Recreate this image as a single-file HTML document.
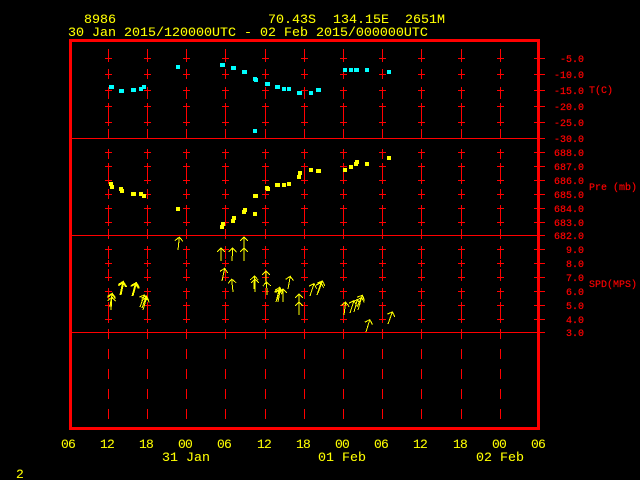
<!DOCTYPE html>
<html><head><meta charset="utf-8"><title>Plot</title>
<style>
html,body{margin:0;padding:0;background:#000;width:640px;height:480px;overflow:hidden}
svg{display:block;position:absolute;left:0;top:0}
text{font-family:"Liberation Mono",monospace;white-space:pre}
.y{fill:#ff0;font-size:13.33px;stroke:#ff0;stroke-width:.05}
.x{fill:#ff0;font-size:13px;letter-spacing:-.8px;stroke:#ff0;stroke-width:.05}
.r{fill:#f00;font-size:10px;stroke:#f00;stroke-width:.2;text-anchor:end}
.l{fill:#f00;font-size:10px;stroke:#f00;stroke-width:.15}
</style></head><body>
<svg width="640" height="480" viewBox="0 0 640 480" xmlns="http://www.w3.org/2000/svg">
<defs>
<path id="col" fill="none" stroke="#f00" stroke-width="1" shape-rendering="crispEdges" d="M.5 49V59M.5 69V79M.5 89V99M.5 109V119M.5 129V139M.5 149V159M.5 169V179M.5 189V199M.5 209V219M.5 229V239M.5 249V259M.5 269V279M.5 289V299M.5 309V319M.5 329V339M.5 349V359M.5 369V379M.5 389V399M.5 409V419
M-3 58.5h7M.5 55v7M-3 74.5h7M.5 71v7M-3 90.5h7M.5 87v7M-3 106.5h7M.5 103v7M-3 122.5h7M.5 119v7
M-3 152.5h7M.5 149v7M-3 166.5h7M.5 163v7M-3 180.5h7M.5 177v7M-3 194.5h7M.5 191v7M-3 208.5h7M.5 205v7M-3 222.5h7M.5 219v7
M-3 249.5h7M.5 246v7M-3 263.5h7M.5 260v7M-3 277.5h7M.5 274v7M-3 291.5h7M.5 288v7M-3 305.5h7M.5 302v7M-3 319.5h7M.5 316v7"/>
<path id="a" fill="none" stroke="#ff0" stroke-width="1" shape-rendering="crispEdges" d="M0 0V-13M-4 -9L0 -13L4 -9"/>
</defs>

<use href="#col" x="108"/><use href="#col" x="147"/><use href="#col" x="186"/><use href="#col" x="225"/><use href="#col" x="265"/><use href="#col" x="304"/><use href="#col" x="343"/><use href="#col" x="382"/><use href="#col" x="421"/><use href="#col" x="461"/><use href="#col" x="500"/>

<path fill="none" stroke="#f00" stroke-width="1" shape-rendering="crispEdges" d="M72 138.5H545M72 235.5H545M72 332.5H545M534 58.5h11M534 74.5h11M534 90.5h11M534 106.5h11M534 122.5h11M534 152.5h11M534 166.5h11M534 180.5h11M534 194.5h11M534 208.5h11M534 222.5h11M534 249.5h11M534 263.5h11M534 277.5h11M534 291.5h11M534 305.5h11M534 319.5h11"/>

<rect x="70.5" y="40.5" width="468" height="388" fill="none" stroke="#f00" stroke-width="3" shape-rendering="crispEdges"/>

<g fill="#0ff" shape-rendering="crispEdges">
<rect x="109" y="85" width="5" height="4"/><rect x="119" y="89" width="5" height="4"/><rect x="131" y="88" width="5" height="4"/><rect x="139" y="87" width="4" height="4"/><rect x="142" y="85" width="4" height="4"/><rect x="176" y="65" width="4" height="4"/><rect x="220" y="63" width="5" height="4"/><rect x="231" y="66" width="5" height="4"/><rect x="242" y="70" width="5" height="4"/><rect x="253" y="77" width="4" height="4"/><rect x="254" y="78" width="4" height="4"/><rect x="253" y="129" width="4" height="4"/><rect x="265" y="82" width="5" height="4"/><rect x="275" y="85" width="5" height="4"/><rect x="282" y="87" width="4" height="4"/><rect x="287" y="87" width="4" height="4"/><rect x="297" y="91" width="5" height="4"/><rect x="309" y="91" width="4" height="4"/><rect x="316" y="88" width="5" height="4"/><rect x="343" y="68" width="4" height="4"/><rect x="349" y="68" width="4" height="4"/><rect x="354" y="68" width="5" height="4"/><rect x="365" y="68" width="4" height="4"/><rect x="387" y="70" width="4" height="4"/>
</g>
<g fill="#ff0" shape-rendering="crispEdges">
<rect x="109" y="182" width="4" height="4"/><rect x="110" y="185" width="4" height="4"/><rect x="119" y="187" width="4" height="4"/><rect x="120" y="189" width="4" height="4"/><rect x="131" y="192" width="5" height="4"/><rect x="139" y="192" width="4" height="4"/><rect x="142" y="194" width="4" height="4"/><rect x="176" y="207" width="4" height="4"/><rect x="220" y="225" width="4" height="4"/><rect x="221" y="222" width="4" height="4"/><rect x="231" y="219" width="4" height="4"/><rect x="232" y="216" width="4" height="4"/><rect x="242" y="210" width="4" height="4"/><rect x="243" y="208" width="4" height="4"/><rect x="253" y="212" width="4" height="4"/><rect x="253" y="194" width="5" height="4"/><rect x="265" y="186" width="4" height="4"/><rect x="266" y="187" width="4" height="4"/><rect x="275" y="183" width="5" height="4"/><rect x="282" y="183" width="4" height="4"/><rect x="287" y="182" width="4" height="4"/><rect x="297" y="175" width="4" height="4"/><rect x="298" y="171" width="4" height="4"/><rect x="309" y="168" width="4" height="4"/><rect x="316" y="169" width="5" height="4"/><rect x="343" y="168" width="4" height="4"/><rect x="349" y="165" width="4" height="4"/><rect x="354" y="162" width="4" height="4"/><rect x="355" y="160" width="4" height="4"/><rect x="365" y="162" width="4" height="4"/><rect x="387" y="156" width="4" height="4"/>
</g>

<use href="#a" transform="translate(111 310) rotate(4)"/>
<use href="#a" transform="translate(110 307) rotate(9)"/>
<use href="#a" transform="translate(110 306) rotate(10)"/>
<use href="#a" transform="translate(120 295) rotate(12)"/>
<use href="#a" transform="translate(121 295) rotate(12)"/>
<use href="#a" transform="translate(120.5 294) rotate(12)"/>
<use href="#a" transform="translate(132 296) rotate(15)"/>
<use href="#a" transform="translate(133 295) rotate(15)"/>
<use href="#a" transform="translate(133 296) rotate(15)"/>
<use href="#a" transform="translate(140 307) rotate(20)"/>
<use href="#a" transform="translate(143 310) rotate(16)"/>
<use href="#a" transform="translate(142 308) rotate(20)"/>
<use href="#a" transform="translate(178 250) rotate(6)"/>
<use href="#a" transform="translate(221 261)"/>
<use href="#a" transform="translate(232 261) rotate(3)"/>
<use href="#a" transform="translate(244 261)"/>
<use href="#a" transform="translate(244 250)"/>
<use href="#a" transform="translate(222 281) rotate(12)"/>
<use href="#a" transform="translate(233 292) rotate(-6)"/>
<use href="#a" transform="translate(255 292)"/>
<use href="#a" transform="translate(254 289) rotate(2)"/>
<use href="#a" transform="translate(266 284)"/>
<use href="#a" transform="translate(267 295) rotate(-2)"/>
<use href="#a" transform="translate(276 302) rotate(14)"/>
<use href="#a" transform="translate(278 302) rotate(10)"/>
<use href="#a" transform="translate(277 300) rotate(12)"/>
<use href="#a" transform="translate(283 302)"/>
<use href="#a" transform="translate(288 289) rotate(10)"/>
<use href="#a" transform="translate(299 307)"/>
<use href="#a" transform="translate(299 315)"/>
<use href="#a" transform="translate(310 296) rotate(18)"/>
<use href="#a" transform="translate(317 295) rotate(18)"/>
<use href="#a" transform="translate(318 293) rotate(20)"/>
<use href="#a" transform="translate(344 315) rotate(7)"/>
<use href="#a" transform="translate(350 313) rotate(18)"/>
<use href="#a" transform="translate(354 312) rotate(15)"/>
<use href="#a" transform="translate(358 310) rotate(16)"/>
<use href="#a" transform="translate(357 307) rotate(25)"/>
<use href="#a" transform="translate(366 332) rotate(17)"/>
<use href="#a" transform="translate(388 324) rotate(20)"/>

<text class="y" x="84" y="23">8986</text>
<text class="y" x="268" y="23">70.43S</text>
<text class="y" x="333" y="23">134.15E</text>
<text class="y" x="405" y="23">2651M</text>
<text class="y" x="68" y="36">30 Jan 2015/120000UTC - 02 Feb 2015/000000UTC</text>

<text class="x" x="61" y="448">06</text><text class="x" x="100" y="448">12</text><text class="x" x="139" y="448">18</text><text class="x" x="178" y="448">00</text><text class="x" x="217" y="448">06</text><text class="x" x="257" y="448">12</text><text class="x" x="296" y="448">18</text><text class="x" x="335" y="448">00</text><text class="x" x="374" y="448">06</text><text class="x" x="413" y="448">12</text><text class="x" x="453" y="448">18</text><text class="x" x="492" y="448">00</text><text class="x" x="531" y="448">06</text>
<text class="y" x="162" y="461">31 Jan</text>
<text class="y" x="318" y="461">01 Feb</text>
<text class="y" x="476" y="461">02 Feb</text>
<text class="x" x="16" y="478">2</text>

<text class="r" x="584" y="62">-5.0</text><text class="r" x="584" y="78">-10.0</text><text class="r" x="584" y="94">-15.0</text><text class="r" x="584" y="110">-20.0</text><text class="r" x="584" y="126">-25.0</text><text class="r" x="584" y="142">-30.0</text>
<text class="r" x="584" y="156">688.0</text><text class="r" x="584" y="170">687.0</text><text class="r" x="584" y="184">686.0</text><text class="r" x="584" y="198">685.0</text><text class="r" x="584" y="212">684.0</text><text class="r" x="584" y="226">683.0</text><text class="r" x="584" y="239">682.0</text>
<text class="r" x="584" y="253">9.0</text><text class="r" x="584" y="267">8.0</text><text class="r" x="584" y="281">7.0</text><text class="r" x="584" y="295">6.0</text><text class="r" x="584" y="309">5.0</text><text class="r" x="584" y="323">4.0</text><text class="r" x="584" y="336">3.0</text>
<text class="l" x="589" y="93">T(C)</text>
<text class="l" x="589" y="190">Pre (mb)</text>
<text class="l" x="589" y="287">SPD(MPS)</text>
</svg>
</body></html>
